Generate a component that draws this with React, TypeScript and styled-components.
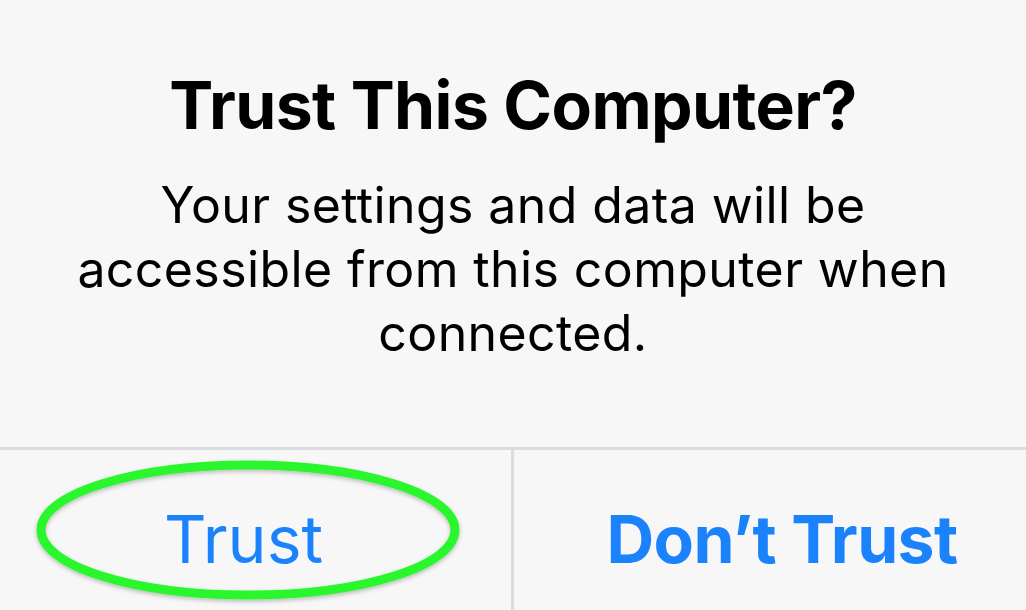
import React from 'react';
import styled, {createGlobalStyle} from "styled-components";

const GlobalStyle = createGlobalStyle`
    html, body {
        margin: 0;
        padding: 0;
        background: #f7f7f7;
    }
    body {
        font-family: Inter, "Noto Sans", "Liberation Sans", sans-serif;
        -webkit-font-smoothing: antialiased;
    }
`

export default function App() {
    return (
        <>
            <GlobalStyle/>
            <Alert>
                <Content>
                    <Title>Trust This Computer?</Title>
                    <Message>
                        Your settings and data will be<br/>
                        accessible from this computer when<br/>
                        connected.
                    </Message>
                </Content>
                <Actions>
                    <ActionButton $shift={-12}>
                        <Highlight viewBox="0 0 440 150" aria-hidden="true">
                            <defs>
                                <filter id="ringShadow" x="-10%" y="-20%" width="120%" height="140%">
                                    <feDropShadow dx="0" dy="2" stdDeviation="2" floodColor="#000" floodOpacity="0.25"/>
                                </filter>
                            </defs>
                            <ellipse cx="220" cy="74" rx="207" ry="65" fill="none" stroke="#2bf62f"
                                     strokeWidth="9" filter="url(#ringShadow)"/>
                        </Highlight>
                        Trust
                    </ActionButton>
                    <ActionButton $bold $shift={12}>Don’t Trust</ActionButton>
                </Actions>
            </Alert>
        </>
    );
}

const Alert = styled.div`
    width: 1026px;
    height: 610px;
    overflow: hidden;
    display: flex;
    flex-direction: column;
    background: #f7f7f7;
`

const Content = styled.div`
    height: 450px;
    flex-shrink: 0;
    box-sizing: border-box;
    padding-top: 65px;
    text-align: center;
    color: #000;
    border-bottom: 3px solid #dcdce0;
`

const Title = styled.h1`
    margin: 0;
    font-size: 66px;
    font-weight: 700;
    line-height: 80px;
    letter-spacing: -0.6px;
`

const Message = styled.p`
    margin: 28px 0 0;
    font-size: 50px;
    font-weight: 400;
    line-height: 64px;
    letter-spacing: 0.4px;
`

const Actions = styled.div`
    flex: 1;
    display: grid;
    grid-template-columns: 511px 1fr;
`

const ActionButton = styled.button<{ $bold?: boolean; $shift: number }>`
    position: relative;
    border: none;
    background: transparent;
    padding: 49px 0 0 ${p => (p.$shift > 0 ? p.$shift * 2 : 0)}px;
    padding-right: ${p => (p.$shift < 0 ? -p.$shift * 2 : 0)}px;
    display: flex;
    justify-content: center;
    align-items: flex-start;
    font-family: Inter, "Noto Sans", "Liberation Sans", sans-serif;
    font-size: 66px;
    line-height: 80px;
    font-weight: ${p => (p.$bold ? 700 : 400)};
    letter-spacing: ${p => (p.$bold ? '-0.6px' : '0')};
    color: #1a82fb;

    & + & {
        border-left: 3px solid #dcdce0;
    }
`

const Highlight = styled.svg`
    position: absolute;
    left: 28px;
    top: 6px;
    width: 440px;
    height: 150px;
    pointer-events: none;
`
